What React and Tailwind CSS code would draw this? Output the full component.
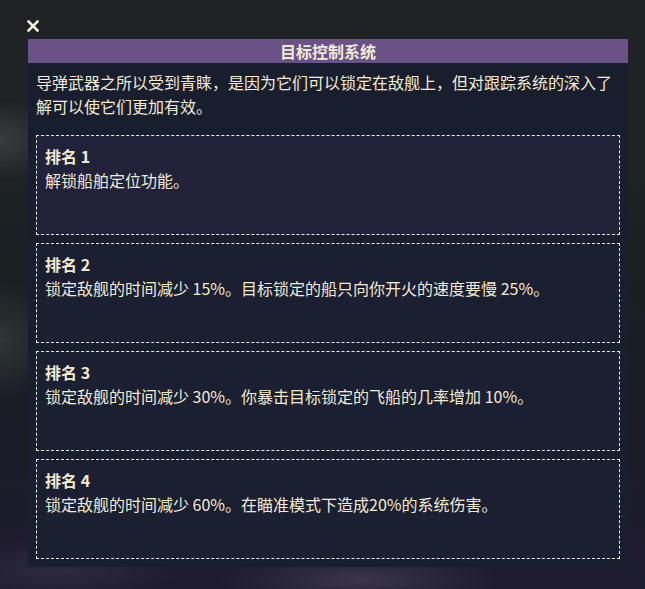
import React from "react";

const ranks = [
  { n: "1", text: "解锁船舶定位功能。", bg: "bg-[#21223a]" },
  { n: "2", text: "锁定敌舰的时间减少 15%。目标锁定的船只向你开火的速度要慢 25%。", bg: "bg-[#1a1f31]" },
  { n: "3", text: "锁定敌舰的时间减少 30%。你暴击目标锁定的飞船的几率增加 10%。", bg: "bg-[#1a1f31]" },
  { n: "4", text: "锁定敌舰的时间减少 60%。在瞄准模式下造成20%的系统伤害。", bg: "bg-[#1a1f31]" },
];

export default function App() {
  return (
    <div
      className="w-[645px] h-[589px] overflow-hidden bg-[radial-gradient(ellipse_60px_40px_at_0px_140px,#3a3d40,transparent),radial-gradient(ellipse_60px_60px_at_0px_340px,#2f3636,transparent),radial-gradient(ellipse_140px_30px_at_360px_580px,#3a3548,transparent),radial-gradient(ellipse_120px_30px_at_60px_570px,#2e2b3f,transparent),linear-gradient(180deg,#1f2225_0%,#1e2225_30%,#182022_45%,#1a1c26_70%,#1e1b2f_100%)] text-[#f3ead2] flex flex-col pl-[28px] pt-[20px]"
      style={{ fontFamily: '"Noto Sans CJK SC", "Noto Sans", sans-serif' }}
    >
      <button className="w-[12px] h-[12px] -ml-[1px] flex items-center justify-center">
        <svg width="12" height="12" viewBox="0 0 12 12">
          <path d="M1.5 1.5 L10.5 10.5 M10.5 1.5 L1.5 10.5" stroke="#f5eed8" strokeWidth="2.6" strokeLinecap="square" />
        </svg>
      </button>

      <div className="mt-[7px] w-[600px] bg-[#191e2f] pb-[8px]">
        <div className="h-[24px] bg-[#6a5289] flex items-center justify-center text-[16px] font-bold leading-[24px]">
          目标控制系统
        </div>
        <p className="px-[8px] pt-[7px] pb-[17px] text-[16px] leading-[24px]">
          导弹武器之所以受到青睐，是因为它们可以锁定在敌舰上，但对跟踪系统的深入了解可以使它们更加有效。
        </p>
        <div className="flex flex-col gap-[8px] px-[8px]">
          {ranks.map((r) => (
            <div
              key={r.n}
              className={`h-[100px] border border-dashed border-[#eeeeee] ${r.bg} px-[8px] pt-[8px]`}
            >
              <div className="text-[16px] font-bold leading-[24px]">排名 {r.n}</div>
              <div className="text-[16px] leading-[24px]">{r.text}</div>
            </div>
          ))}
        </div>
      </div>
    </div>
  );
}
